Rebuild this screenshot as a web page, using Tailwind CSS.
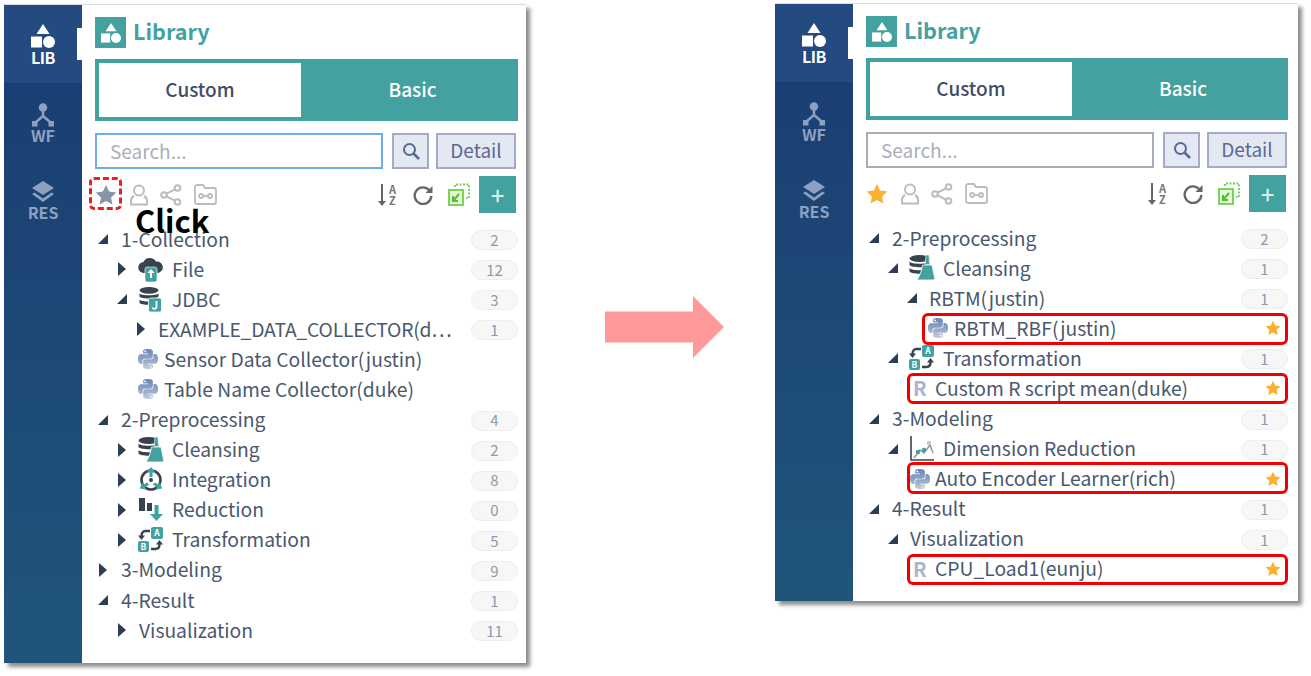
<!DOCTYPE html>
<html lang="en">
<head>
  <meta charset="UTF-8">
  <title>Library</title>
  <script src="https://cdn.jsdelivr.net/npm/@tailwindcss/browser@4"></script>
</head>
<body class="bg-white w-[1311px] h-[676px] overflow-hidden font-['Noto_Sans_CJK_KR','Noto_Sans',sans-serif] text-[19.3px] text-[#4a586e]">

  <!-- shared icons -->
  <svg class="absolute w-0 h-0">
    <defs>
      <linearGradient id="py" x1="0" y1="0" x2="0" y2="1"><stop offset="0" stop-color="#6c88b6"/><stop offset="0.5" stop-color="#8fa3c4"/><stop offset="1" stop-color="#c3ccdc"/></linearGradient>
    </defs>
    <symbol id="open" viewBox="0 0 10 10"><path d="M10 0v10H0z" fill="#2e3d57"/></symbol>
    <symbol id="closed" viewBox="0 0 10 14"><path d="M1 0l8 7-8 7z" fill="#2e3d57"/></symbol>
    <symbol id="python" viewBox="0 0 24 24"><path fill="url(#py)" d="M14.25.18l.9.2.73.26.59.3.45.32.34.34.25.34.16.33.1.3.04.26.02.2-.01.13V8.5l-.05.63-.13.55-.21.46-.26.38-.3.31-.33.25-.35.19-.35.14-.33.1-.3.07-.26.04-.21.02H8.77l-.69.05-.59.14-.5.22-.41.27-.33.32-.27.35-.2.36-.15.37-.1.35-.07.32-.04.27-.02.21v3.06H3.17l-.21-.03-.28-.07-.32-.12-.35-.18-.36-.26-.36-.36-.35-.46-.32-.59-.28-.73-.21-.88-.14-1.05-.05-1.23.06-1.22.16-1.04.24-.87.32-.71.36-.57.4-.44.42-.33.42-.24.4-.16.36-.1.32-.05.24-.01h.16l.06.01h8.16v-.83H6.18l-.01-2.75-.02-.37.05-.34.11-.31.17-.28.25-.26.31-.23.38-.2.44-.18.51-.15.58-.12.64-.1.71-.06.77-.04.84-.02 1.27.05zm-6.3 1.98l-.23.33-.08.41.08.41.23.34.33.22.41.09.41-.09.33-.22.23-.34.08-.41-.08-.41-.23-.33-.33-.22-.41-.09-.41.09zm13.09 3.95l.28.06.32.12.35.18.36.27.36.35.35.47.32.59.28.73.21.88.14 1.04.05 1.23-.06 1.23-.16 1.04-.24.86-.32.71-.36.57-.4.45-.42.33-.42.24-.4.16-.36.09-.32.05-.24.02-.16-.01h-8.22v.82h5.84l.01 2.76.02.36-.05.34-.11.31-.17.29-.25.25-.31.24-.38.2-.44.17-.51.15-.58.13-.64.09-.71.07-.77.04-.84.01-1.27-.04-1.07-.14-.9-.2-.73-.25-.59-.3-.45-.33-.34-.34-.25-.34-.16-.33-.1-.3-.04-.25-.02-.2.01-.13v-5.34l.05-.64.13-.54.21-.46.26-.38.3-.32.33-.24.35-.2.35-.14.33-.1.3-.06.26-.04.21-.02.13-.01h5.84l.69-.05.59-.14.5-.21.41-.28.33-.32.27-.35.2-.36.15-.36.1-.35.07-.32.04-.28.02-.21V6.07h2.09l.14.01zm-6.47 14.25l-.23.33-.08.41.08.41.23.33.33.23.41.08.41-.08.33-.23.23-.33.08-.41-.08-.41-.23-.33-.33-.23-.41-.08-.41.08z"/></symbol>
    <symbol id="star" viewBox="0 0 24 24"><path d="M12 1l3.4 7.2 7.8 1-5.7 5.400 1.500 7.800L12 18.600l-7 3.800 1.500-7.800L.8 9.200l7.800-1z"/></symbol>
    <symbol id="db" viewBox="0 0 21 21" overflow="visible"><g fill="#39434f"><ellipse cx="10.500" cy="3.500" rx="10" ry="3.500"/><path d="M.5 6.500c1.500 3 18.500 3 20 0V10c-1.500 3-18.500 3-20 0zM.5 13c1.500 3 18.500 3 20 0v3.500c-1.500 3-18.500 3-20 0z"/></g></symbol>
    <symbol id="broom" viewBox="0 0 26 26">
      <use href="#db" x="0" y="0" width="21" height="21"/>
      <path d="M17 0h3l.5 9.500h-4.500z" fill="#43a19f" stroke="#fff" stroke-width=".6"/><path d="M13.500 10h9.500l3 14.500c-2 .5-3 .5-5 .5H8c2-3 4.500-8 5.500-15z" fill="#43a19f" stroke="#fff" stroke-width=".8"/>
    </symbol>
  </svg>

  <div class="flex items-start pt-[4px] pl-[4px]">

    <!-- before panel -->
    <div class="flex w-[522px] h-[659px] shrink-0 bg-white border-t border-[#d6dcea] shadow-[4px_4px_4px_rgba(0,0,0,0.45)]">
      <aside class="w-[78px] shrink-0 bg-linear-to-b from-[#1a3b72] to-[#20557a] flex flex-col items-center">
        <div class="relative w-full h-[78px] bg-[#234b80] flex flex-col items-center pt-[19px] text-white">
          <svg class="w-[24px] h-[24px]" viewBox="0 0 24 24" fill="#fff"><path d="M12 0l6.500 10h-13z"/><rect x="0" y="12.500" width="11" height="11"/><circle cx="18" cy="18" r="6"/></svg>
          <span class="text-[16px] leading-[20px] font-bold -mt-[1px] tracking-[-0.5px]">LIB</span>
          <span class="absolute right-0 top-[23px] w-[5px] h-[32px] bg-white"></span>
        </div>
        <div class="flex flex-col items-center pt-[20px] text-[#8ea0bf]">
          <svg class="w-[24px] h-[24px]" viewBox="0 0 24 24" fill="none" stroke="currentColor" stroke-width="2.500"><circle cx="12" cy="4.500" r="3" fill="currentColor"/><path d="M12 7v6M12 13l-7 6M12 13l7 6"/><rect x="1" y="18" width="5.500" height="5.500" fill="currentColor" stroke="none"/><rect x="17.500" y="18" width="5.500" height="5.500" fill="currentColor" stroke="none"/></svg>
          <span class="text-[16px] leading-[20px] font-bold -mt-[2px]">WF</span>
        </div>
        <div class="flex flex-col items-center pt-[35px] text-[#8ea0bf]">
          <svg class="w-[24px] h-[24px]" viewBox="0 0 24 24" fill="currentColor"><path d="M12 1l11 7-11 7L1 8z"/><path d="M3.500 12.500L1 14l11 8 11-8-2.500-1.500L12 18.500z"/></svg>
          <span class="text-[16px] leading-[20px] font-bold -mt-[2px]">RES</span>
        </div>
      </aside>
      <main class="flex-1 pl-[13px] pr-[8px] relative">
        <div class="flex items-center h-[31px] mt-[12px]">
          <div class="w-[31px] h-[31px] bg-[#43a19f] flex items-center justify-center">
            <svg class="w-[20px] h-[20px]" viewBox="0 0 24 24" fill="#fff"><path d="M12 0l6.500 10h-13z"/><rect x="0" y="12.500" width="11" height="11"/><circle cx="18" cy="18" r="6"/></svg>
          </div>
          <span class="ml-[7px] pb-[2px] text-[21.6px] font-bold text-[#43a19f]">Library</span>
        </div>
        <div class="flex h-[62px] mt-[11px] bg-[#43a19f] p-[4px] text-[19px]">
          <div class="w-[202px] pb-[2px] bg-white flex items-center justify-center font-medium text-[#3f4d68]">Custom</div>
          <div class="flex-1 pb-[2px] pl-[10px] flex items-center justify-center font-medium text-white">Basic</div>
        </div>
        <div class="flex mt-[12px] h-[36px] text-[19px]">
          <input class="w-[288px] h-full border-2 border-[#6aaeef] px-[13px] pb-[2px] outline-none placeholder:text-[#a9afbb]" placeholder="Search...">
          <button class="ml-[9px] w-[37px] bg-[#e4e8f3] border-2 border-[#a3abc8] flex items-center justify-center">
            <svg class="w-[18px] h-[18px]" viewBox="0 0 18 18" fill="none" stroke="#566a96" stroke-width="2"><circle cx="7.500" cy="7.500" r="5.500"/><path d="M11.500 11.500L17 17" stroke-width="2.500"/></svg>
          </button>
          <button class="ml-[7px] w-[80px] pb-[2px] bg-[#e4e8f3] border-2 border-[#a3abc8] text-[#5a6a94]">Detail</button>
        </div>
        <div class="flex items-center h-[37px] mt-[7px] pr-[2px]">
          <svg class="w-[22px] h-[22px] fill-[#8a94a8]"><use href="#star"/></svg>
          <svg class="ml-[13px] w-[18px] h-[22px]" viewBox="0 0 18 22" fill="none" stroke="#bcbcbc" stroke-width="2"><circle cx="9" cy="6.500" r="5"/><path d="M4 12c-2 1-3 3-3 5v3.500h16V17c0-2-1-4-3-5"/></svg>
          <svg class="ml-[12px] w-[22px] h-[22px]" viewBox="0 0 22 22" fill="none" stroke="#bcbcbc" stroke-width="2"><circle cx="17.500" cy="4" r="2.800"/><circle cx="4" cy="11" r="2.800"/><circle cx="17.500" cy="18" r="2.800"/><path d="M6.500 9.700l8.500-4.400M6.500 12.300l8.500 4.400"/></svg>
          <svg class="ml-[12px] w-[23px] h-[21px]" viewBox="0 0 23 21" fill="none" stroke="#bcbcbc" stroke-width="1.800"><path d="M1 3a2 2 0 0 1 2-2h6l2 3h9a2 2 0 0 1 2 2v12a2 2 0 0 1-2 2H3a2 2 0 0 1-2-2z"/><circle cx="7" cy="12" r="2"/><circle cx="16" cy="12" r="2"/><path d="M9 12h5"/></svg>
          <div class="ml-auto flex items-center">
            <svg class="w-[8px] h-[22px]" viewBox="0 0 8 22" fill="#666"><path d="M3 0h2v17h3l-4 5-4-5h3z"/></svg>
            <div class="ml-[3px] flex flex-col items-center text-[11px] leading-[11px] font-bold text-[#777]"><span>A</span><span>Z</span></div>
            <svg class="ml-[17px] w-[20px] h-[20px]" viewBox="0 0 20 20" fill="none" stroke="#666" stroke-width="2.400"><path d="M16.500 5.500A8.300 8.300 0 1 0 18.300 11"/><path d="M19.500 1v7h-7z" fill="#666" stroke="none"/></svg>
            <svg class="ml-[15px] w-[22px] h-[23px]" viewBox="0 0 22 23" fill="none" stroke="#6fcf4a" stroke-width="1.800"><path d="M7 4V1.500h14V15h-3" stroke-dasharray="2 1.500"/><rect x="1" y="7" width="14" height="15" fill="#e4f7da"/><path d="M11 11l-6 7M5 13v5h5" stroke="#4fbf2a" stroke-width="2"/></svg>
            <div class="ml-[9px] w-[37px] h-[37px] bg-[#43a19f] flex items-center justify-center text-[#d8eceb] text-[24px] font-medium">+</div>
          </div>
        </div>
        <!-- annotation over the toolbar -->
        <div class="absolute left-[7px] top-[172px] w-[33px] h-[33px] border-[3px] border-dashed border-[#ee1c25] rounded-[5px]"></div>
        <span class="absolute left-[53px] top-[195px] text-[31px] leading-[40px] font-bold text-black">Click</span>

        <div class="mt-[11px]">
          <div class="flex items-center h-[30.08px] pl-[3px]"><svg class="w-[10px] h-[10px]"><use href="#open"/></svg><span class="ml-[13px]">1-Collection</span><span class="ml-auto mt-[2px] w-[47px] h-[20px] rounded-full bg-[#f7f7f7] border border-[#eeeeee] flex items-center justify-center text-[15px] text-[#8a9ab0]">2</span></div>
          <div class="flex items-center h-[30.08px] pl-[22px]"><svg class="w-[10px] h-[14px]"><use href="#closed"/></svg>
            <svg class="ml-[11px] w-[26px] h-[25px]" viewBox="0 0 26 25"><path d="M6 16a5.500 5.500 0 0 1-.5-11A7 7 0 0 1 18 4.500 5.800 5.800 0 0 1 20 16z" fill="#39434f"/><rect x="7" y="10" width="12" height="15" rx="2" fill="#43a19f" stroke="#fff" stroke-width=".6"/><path d="M13 12l3.500 4H14v5h-2v-5H9.500z" fill="#fff"/></svg>
            <span class="ml-[8px]">File</span><span class="ml-auto mt-[2px] w-[47px] h-[20px] rounded-full bg-[#f7f7f7] border border-[#eeeeee] flex items-center justify-center text-[15px] text-[#8a9ab0]">12</span></div>
          <div class="flex items-center h-[30.08px] pl-[22px]"><svg class="w-[10px] h-[10px]"><use href="#open"/></svg>
            <svg class="ml-[11px] w-[26px] h-[25px]" viewBox="0 0 26 25"><use href="#db" x="1" y="0" width="20" height="20"/><rect x="10.500" y="11" width="13" height="14" rx="2" fill="#43a19f" stroke="#fff" stroke-width=".8"/><path d="M18.500 14v6a2.200 2.200 0 0 1-4.200 .5" fill="none" stroke="#fff" stroke-width="1.800"/></svg>
            <span class="ml-[8px]">JDBC</span><span class="ml-auto mt-[2px] w-[47px] h-[20px] rounded-full bg-[#f7f7f7] border border-[#eeeeee] flex items-center justify-center text-[15px] text-[#8a9ab0]">3</span></div>
          <div class="flex items-center h-[30.08px] pl-[41px]"><svg class="w-[10px] h-[14px]"><use href="#closed"/></svg><span class="ml-[12px] tracking-[-0.18px]">EXAMPLE_DATA_COLLECTOR(d⋯</span><span class="ml-auto mt-[2px] w-[47px] h-[20px] rounded-full bg-[#f7f7f7] border border-[#eeeeee] flex items-center justify-center text-[15px] text-[#8a9ab0]">1</span></div>
          <div class="flex items-center h-[30.08px] pl-[43px]"><svg class="w-[20px] h-[20px]"><use href="#python"/></svg><span class="ml-[6px]">Sensor Data Collector(justin)</span></div>
          <div class="flex items-center h-[30.08px] pl-[43px]"><svg class="w-[20px] h-[20px]"><use href="#python"/></svg><span class="ml-[6px]">Table Name Collector(duke)</span></div>
          <div class="flex items-center h-[30.08px] pl-[3px]"><svg class="w-[10px] h-[10px]"><use href="#open"/></svg><span class="ml-[13px]">2-Preprocessing</span><span class="ml-auto mt-[2px] w-[47px] h-[20px] rounded-full bg-[#f7f7f7] border border-[#eeeeee] flex items-center justify-center text-[15px] text-[#8a9ab0]">4</span></div>
          <div class="flex items-center h-[30.08px] pl-[22px]"><svg class="w-[10px] h-[14px]"><use href="#closed"/></svg><svg class="ml-[11px] w-[26px] h-[26px]"><use href="#broom"/></svg><span class="ml-[8px]">Cleansing</span><span class="ml-auto mt-[2px] w-[47px] h-[20px] rounded-full bg-[#f7f7f7] border border-[#eeeeee] flex items-center justify-center text-[15px] text-[#8a9ab0]">2</span></div>
          <div class="flex items-center h-[30.08px] pl-[22px]"><svg class="w-[10px] h-[14px]"><use href="#closed"/></svg>
            <svg class="ml-[11px] w-[26px] h-[25px]" viewBox="0 0 26 25"><circle cx="13" cy="13" r="9.500" fill="none" stroke="#39434f" stroke-width="2.600"/><circle cx="13" cy="13" r="2" fill="#39434f"/><path d="M13 0l4.500 5.500H14.500V10h-3V5.500H8.500zM2 21.500l2-6.500 1.500 2.500 4-2 1.500 2.500-4 2 1.500 2.500zM24 21.500l-2-6.500-1.500 2.500-4-2-1.500 2.500 4 2-1.500 2.500z" fill="#43a19f"/></svg>
            <span class="ml-[8px]">Integration</span><span class="ml-auto mt-[2px] w-[47px] h-[20px] rounded-full bg-[#f7f7f7] border border-[#eeeeee] flex items-center justify-center text-[15px] text-[#8a9ab0]">8</span></div>
          <div class="flex items-center h-[30.08px] pl-[22px]"><svg class="w-[10px] h-[14px]"><use href="#closed"/></svg>
            <svg class="ml-[11px] w-[26px] h-[24px]" viewBox="0 0 26 24"><rect x="1" y="0" width="6" height="13" fill="#39434f"/><rect x="9" y="5" width="5" height="8" fill="#39434f"/><path d="M16.500 7h4v9H25l-6.500 7-6.500-7h4.500z" fill="#43a19f"/></svg>
            <span class="ml-[8px]">Reduction</span><span class="ml-auto mt-[2px] w-[47px] h-[20px] rounded-full bg-[#f7f7f7] border border-[#eeeeee] flex items-center justify-center text-[15px] text-[#8a9ab0]">0</span></div>
          <div class="flex items-center h-[30.08px] pl-[22px]"><svg class="w-[10px] h-[14px]"><use href="#closed"/></svg>
            <svg class="ml-[11px] w-[26px] h-[26px]" viewBox="0 0 26 26"><rect x="13" y="0" width="12" height="12" rx="2" fill="#43a19f"/><rect x="0" y="14" width="11" height="11" rx="2" fill="#43a19f"/><path d="M12 4H7.500C4.500 4 3.500 6.500 3.500 9" fill="none" stroke="#39434f" stroke-width="2.400"/><path d="M0 8.500h7l-3.500 4.500z" fill="#39434f"/><path d="M13 22h4.500c3 0 4-2.500 4-5" fill="none" stroke="#39434f" stroke-width="2.400"/><path d="M18 17.500h7l-3.500-4.500z" fill="#39434f"/><text x="19" y="9" font-size="8.500" font-weight="700" text-anchor="middle" fill="#fff">A</text><text x="5.500" y="23" font-size="8.500" font-weight="700" text-anchor="middle" fill="#fff">B</text></svg>
            <span class="ml-[8px]">Transformation</span><span class="ml-auto mt-[2px] w-[47px] h-[20px] rounded-full bg-[#f7f7f7] border border-[#eeeeee] flex items-center justify-center text-[15px] text-[#8a9ab0]">5</span></div>
          <div class="flex items-center h-[30.08px] pl-[3px]"><svg class="w-[10px] h-[14px]"><use href="#closed"/></svg><span class="ml-[13px]">3-Modeling</span><span class="ml-auto mt-[2px] w-[47px] h-[20px] rounded-full bg-[#f7f7f7] border border-[#eeeeee] flex items-center justify-center text-[15px] text-[#8a9ab0]">9</span></div>
          <div class="flex items-center h-[30.08px] pl-[3px]"><svg class="w-[10px] h-[10px]"><use href="#open"/></svg><span class="ml-[13px]">4-Result</span><span class="ml-auto mt-[2px] w-[47px] h-[20px] rounded-full bg-[#f7f7f7] border border-[#eeeeee] flex items-center justify-center text-[15px] text-[#8a9ab0]">1</span></div>
          <div class="flex items-center h-[30.08px] pl-[22px]"><svg class="w-[10px] h-[14px]"><use href="#closed"/></svg><span class="ml-[12px]">Visualization</span><span class="ml-auto mt-[2px] w-[47px] h-[20px] rounded-full bg-[#f7f7f7] border border-[#eeeeee] flex items-center justify-center text-[15px] text-[#8a9ab0]">11</span></div>
        </div>
      </main>
    </div>

    <!-- arrow -->
    <svg class="ml-[79px] mt-[292px] w-[119px] h-[62px] shrink-0" viewBox="0 0 119 62"><path d="M0 15.500h88V0l31 31-31 31V46.500H0z" fill="#ff9999"/></svg>

    <!-- after panel -->
    <div class="flex w-[523px] h-[598px] ml-[51px] -mt-[1px] shrink-0 bg-white border-t border-[#d6dcea] shadow-[4px_4px_4px_rgba(0,0,0,0.45)]">
      <aside class="w-[78px] shrink-0 bg-linear-to-b from-[#1a3b72] to-[#20557a] flex flex-col items-center">
        <div class="relative w-full h-[78px] bg-[#234b80] flex flex-col items-center pt-[19px] text-white">
          <svg class="w-[24px] h-[24px]" viewBox="0 0 24 24" fill="#fff"><path d="M12 0l6.500 10h-13z"/><rect x="0" y="12.500" width="11" height="11"/><circle cx="18" cy="18" r="6"/></svg>
          <span class="text-[16px] leading-[20px] font-bold -mt-[1px] tracking-[-0.5px]">LIB</span>
          <span class="absolute right-0 top-[23px] w-[5px] h-[32px] bg-white"></span>
        </div>
        <div class="flex flex-col items-center pt-[20px] text-[#8ea0bf]">
          <svg class="w-[24px] h-[24px]" viewBox="0 0 24 24" fill="none" stroke="currentColor" stroke-width="2.500"><circle cx="12" cy="4.500" r="3" fill="currentColor"/><path d="M12 7v6M12 13l-7 6M12 13l7 6"/><rect x="1" y="18" width="5.500" height="5.500" fill="currentColor" stroke="none"/><rect x="17.500" y="18" width="5.500" height="5.500" fill="currentColor" stroke="none"/></svg>
          <span class="text-[16px] leading-[20px] font-bold -mt-[2px]">WF</span>
        </div>
        <div class="flex flex-col items-center pt-[35px] text-[#8ea0bf]">
          <svg class="w-[24px] h-[24px]" viewBox="0 0 24 24" fill="currentColor"><path d="M12 1l11 7-11 7L1 8z"/><path d="M3.500 12.500L1 14l11 8 11-8-2.500-1.500L12 18.500z"/></svg>
          <span class="text-[16px] leading-[20px] font-bold -mt-[2px]">RES</span>
        </div>
      </aside>
      <main class="flex-1 pl-[13px] pr-[10px]">
        <div class="flex items-center h-[31px] mt-[12px]">
          <div class="w-[31px] h-[31px] bg-[#43a19f] flex items-center justify-center">
            <svg class="w-[20px] h-[20px]" viewBox="0 0 24 24" fill="#fff"><path d="M12 0l6.500 10h-13z"/><rect x="0" y="12.500" width="11" height="11"/><circle cx="18" cy="18" r="6"/></svg>
          </div>
          <span class="ml-[7px] pb-[2px] text-[21.6px] font-bold text-[#43a19f]">Library</span>
        </div>
        <div class="flex h-[62px] mt-[11px] bg-[#43a19f] p-[4px] text-[19px]">
          <div class="w-[202px] pb-[2px] bg-white flex items-center justify-center font-medium text-[#3f4d68]">Custom</div>
          <div class="flex-1 pb-[2px] pl-[10px] flex items-center justify-center font-medium text-white">Basic</div>
        </div>
        <div class="flex mt-[12px] h-[36px] text-[19px]">
          <input class="w-[288px] h-full border-2 border-[#a9adb5] px-[13px] pb-[2px] outline-none placeholder:text-[#a9afbb]" placeholder="Search...">
          <button class="ml-[9px] w-[37px] bg-[#e4e8f3] border-2 border-[#a3abc8] flex items-center justify-center">
            <svg class="w-[18px] h-[18px]" viewBox="0 0 18 18" fill="none" stroke="#566a96" stroke-width="2"><circle cx="7.500" cy="7.500" r="5.500"/><path d="M11.500 11.500L17 17" stroke-width="2.500"/></svg>
          </button>
          <button class="ml-[7px] w-[80px] pb-[2px] bg-[#e4e8f3] border-2 border-[#a3abc8] text-[#5a6a94]">Detail</button>
        </div>
        <div class="flex items-center h-[37px] mt-[7px] pr-[2px]">
          <svg class="w-[22px] h-[22px] fill-[#fbb030]"><use href="#star"/></svg>
          <svg class="ml-[13px] w-[18px] h-[22px]" viewBox="0 0 18 22" fill="none" stroke="#bcbcbc" stroke-width="2"><circle cx="9" cy="6.500" r="5"/><path d="M4 12c-2 1-3 3-3 5v3.500h16V17c0-2-1-4-3-5"/></svg>
          <svg class="ml-[12px] w-[22px] h-[22px]" viewBox="0 0 22 22" fill="none" stroke="#bcbcbc" stroke-width="2"><circle cx="17.500" cy="4" r="2.800"/><circle cx="4" cy="11" r="2.800"/><circle cx="17.500" cy="18" r="2.800"/><path d="M6.500 9.700l8.500-4.400M6.500 12.300l8.500 4.400"/></svg>
          <svg class="ml-[12px] w-[23px] h-[21px]" viewBox="0 0 23 21" fill="none" stroke="#bcbcbc" stroke-width="1.800"><path d="M1 3a2 2 0 0 1 2-2h6l2 3h9a2 2 0 0 1 2 2v12a2 2 0 0 1-2 2H3a2 2 0 0 1-2-2z"/><circle cx="7" cy="12" r="2"/><circle cx="16" cy="12" r="2"/><path d="M9 12h5"/></svg>
          <div class="ml-auto flex items-center">
            <svg class="w-[8px] h-[22px]" viewBox="0 0 8 22" fill="#666"><path d="M3 0h2v17h3l-4 5-4-5h3z"/></svg>
            <div class="ml-[3px] flex flex-col items-center text-[11px] leading-[11px] font-bold text-[#777]"><span>A</span><span>Z</span></div>
            <svg class="ml-[17px] w-[20px] h-[20px]" viewBox="0 0 20 20" fill="none" stroke="#666" stroke-width="2.400"><path d="M16.500 5.500A8.300 8.300 0 1 0 18.300 11"/><path d="M19.500 1v7h-7z" fill="#666" stroke="none"/></svg>
            <svg class="ml-[15px] w-[22px] h-[23px]" viewBox="0 0 22 23" fill="none" stroke="#6fcf4a" stroke-width="1.800"><path d="M7 4V1.500h14V15h-3" stroke-dasharray="2 1.500"/><rect x="1" y="7" width="14" height="15" fill="#e4f7da"/><path d="M11 11l-6 7M5 13v5h5" stroke="#4fbf2a" stroke-width="2"/></svg>
            <div class="ml-[9px] w-[37px] h-[37px] bg-[#43a19f] flex items-center justify-center text-[#d8eceb] text-[24px] font-medium">+</div>
          </div>
        </div>

        <div class="mt-[11px]">
          <div class="flex items-center h-[30.08px] pl-[3px]"><svg class="w-[10px] h-[10px]"><use href="#open"/></svg><span class="ml-[13px]">2-Preprocessing</span><span class="ml-auto mt-[2px] w-[47px] h-[20px] rounded-full bg-[#f7f7f7] border border-[#eeeeee] flex items-center justify-center text-[15px] text-[#8a9ab0]">2</span></div>
          <div class="flex items-center h-[30.08px] pl-[22px]"><svg class="w-[10px] h-[10px]"><use href="#open"/></svg><svg class="ml-[11px] w-[26px] h-[26px]"><use href="#broom"/></svg><span class="ml-[8px]">Cleansing</span><span class="ml-auto mt-[2px] w-[47px] h-[20px] rounded-full bg-[#f7f7f7] border border-[#eeeeee] flex items-center justify-center text-[15px] text-[#8a9ab0]">1</span></div>
          <div class="flex items-center h-[30.08px] pl-[41px]"><svg class="w-[10px] h-[10px]"><use href="#open"/></svg><span class="ml-[12px]">RBTM(justin)</span><span class="ml-auto mt-[2px] w-[47px] h-[20px] rounded-full bg-[#f7f7f7] border border-[#eeeeee] flex items-center justify-center text-[15px] text-[#8a9ab0]">1</span></div>
          <div class="relative flex items-center h-[30.08px] pl-[62px]"><svg class="w-[20px] h-[20px]"><use href="#python"/></svg><span class="ml-[6px]">RBTM_RBF(justin)</span><svg class="ml-auto mr-[7px] w-[16px] h-[16px] fill-[#fbb030]"><use href="#star"/></svg><span class="absolute left-[56px] right-0 top-0 -bottom-[2px] border-[3px] border-[#f00000] rounded-[6px]"></span></div>
          <div class="flex items-center h-[30.08px] pl-[22px]"><svg class="w-[10px] h-[10px]"><use href="#open"/></svg>
            <svg class="ml-[11px] w-[26px] h-[26px]" viewBox="0 0 26 26"><rect x="13" y="0" width="12" height="12" rx="2" fill="#43a19f"/><rect x="0" y="14" width="11" height="11" rx="2" fill="#43a19f"/><path d="M12 4H7.500C4.500 4 3.500 6.500 3.500 9" fill="none" stroke="#39434f" stroke-width="2.400"/><path d="M0 8.500h7l-3.500 4.500z" fill="#39434f"/><path d="M13 22h4.500c3 0 4-2.500 4-5" fill="none" stroke="#39434f" stroke-width="2.400"/><path d="M18 17.500h7l-3.500-4.500z" fill="#39434f"/><text x="19" y="9" font-size="8.500" font-weight="700" text-anchor="middle" fill="#fff">A</text><text x="5.500" y="23" font-size="8.500" font-weight="700" text-anchor="middle" fill="#fff">B</text></svg>
            <span class="ml-[8px]">Transformation</span><span class="ml-auto mt-[2px] w-[47px] h-[20px] rounded-full bg-[#f7f7f7] border border-[#eeeeee] flex items-center justify-center text-[15px] text-[#8a9ab0]">1</span></div>
          <div class="relative flex items-center h-[30.08px] pl-[47px]"><span class="w-[13px] text-[20px] font-bold text-[#a9b5cc]">R</span><span class="ml-[9px]">Custom R script mean(duke)</span><svg class="ml-auto mr-[7px] w-[16px] h-[16px] fill-[#fbb030]"><use href="#star"/></svg><span class="absolute left-[41px] right-0 top-0 -bottom-[1px] border-[3px] border-[#f00000] rounded-[6px]"></span></div>
          <div class="flex items-center h-[30.08px] pl-[3px]"><svg class="w-[10px] h-[10px]"><use href="#open"/></svg><span class="ml-[13px]">3-Modeling</span><span class="ml-auto mt-[2px] w-[47px] h-[20px] rounded-full bg-[#f7f7f7] border border-[#eeeeee] flex items-center justify-center text-[15px] text-[#8a9ab0]">1</span></div>
          <div class="flex items-center h-[30.08px] pl-[22px]"><svg class="w-[10px] h-[10px]"><use href="#open"/></svg>
            <svg class="ml-[11px] w-[26px] h-[26px]" viewBox="0 0 26 26" fill="none"><path d="M2 0v24h23" stroke="#39434f" stroke-width="1.600"/><path d="M5 22l6-8 4 3 6-8 3 8" stroke="#8a939e" stroke-width="1.400"/><circle cx="9" cy="16" r="2.200" fill="#43a19f"/><circle cx="15" cy="14" r="2.200" fill="#43a19f"/><circle cx="20" cy="7" r="2.200" fill="#bfc6cc"/></svg>
            <span class="ml-[8px]">Dimension Reduction</span><span class="ml-auto mt-[2px] w-[47px] h-[20px] rounded-full bg-[#f7f7f7] border border-[#eeeeee] flex items-center justify-center text-[15px] text-[#8a9ab0]">1</span></div>
          <div class="relative flex items-center h-[30.08px] pl-[44px]"><svg class="w-[20px] h-[20px]"><use href="#python"/></svg><span class="ml-[5px]">Auto Encoder Learner(rich)</span><svg class="ml-auto mr-[7px] w-[16px] h-[16px] fill-[#fbb030]"><use href="#star"/></svg><span class="absolute left-[41px] right-0 -top-[2px] bottom-0 border-[3px] border-[#f00000] rounded-[6px]"></span></div>
          <div class="flex items-center h-[30.08px] pl-[3px]"><svg class="w-[10px] h-[10px]"><use href="#open"/></svg><span class="ml-[13px]">4-Result</span><span class="ml-auto mt-[2px] w-[47px] h-[20px] rounded-full bg-[#f7f7f7] border border-[#eeeeee] flex items-center justify-center text-[15px] text-[#8a9ab0]">1</span></div>
          <div class="flex items-center h-[30.08px] pl-[22px]"><svg class="w-[10px] h-[10px]"><use href="#open"/></svg><span class="ml-[12px]">Visualization</span><span class="ml-auto mt-[2px] w-[47px] h-[20px] rounded-full bg-[#f7f7f7] border border-[#eeeeee] flex items-center justify-center text-[15px] text-[#8a9ab0]">1</span></div>
          <div class="relative flex items-center h-[30.08px] pl-[47px]"><span class="w-[13px] text-[20px] font-bold text-[#a9b5cc]">R</span><span class="ml-[9px]">CPU_Load1(eunju)</span><svg class="ml-auto mr-[7px] w-[16px] h-[16px] fill-[#fbb030]"><use href="#star"/></svg><span class="absolute left-[41px] right-0 top-0 -bottom-[1px] border-[3px] border-[#f00000] rounded-[6px]"></span></div>
        </div>
      </main>
    </div>
  </div>
</body>
</html>
